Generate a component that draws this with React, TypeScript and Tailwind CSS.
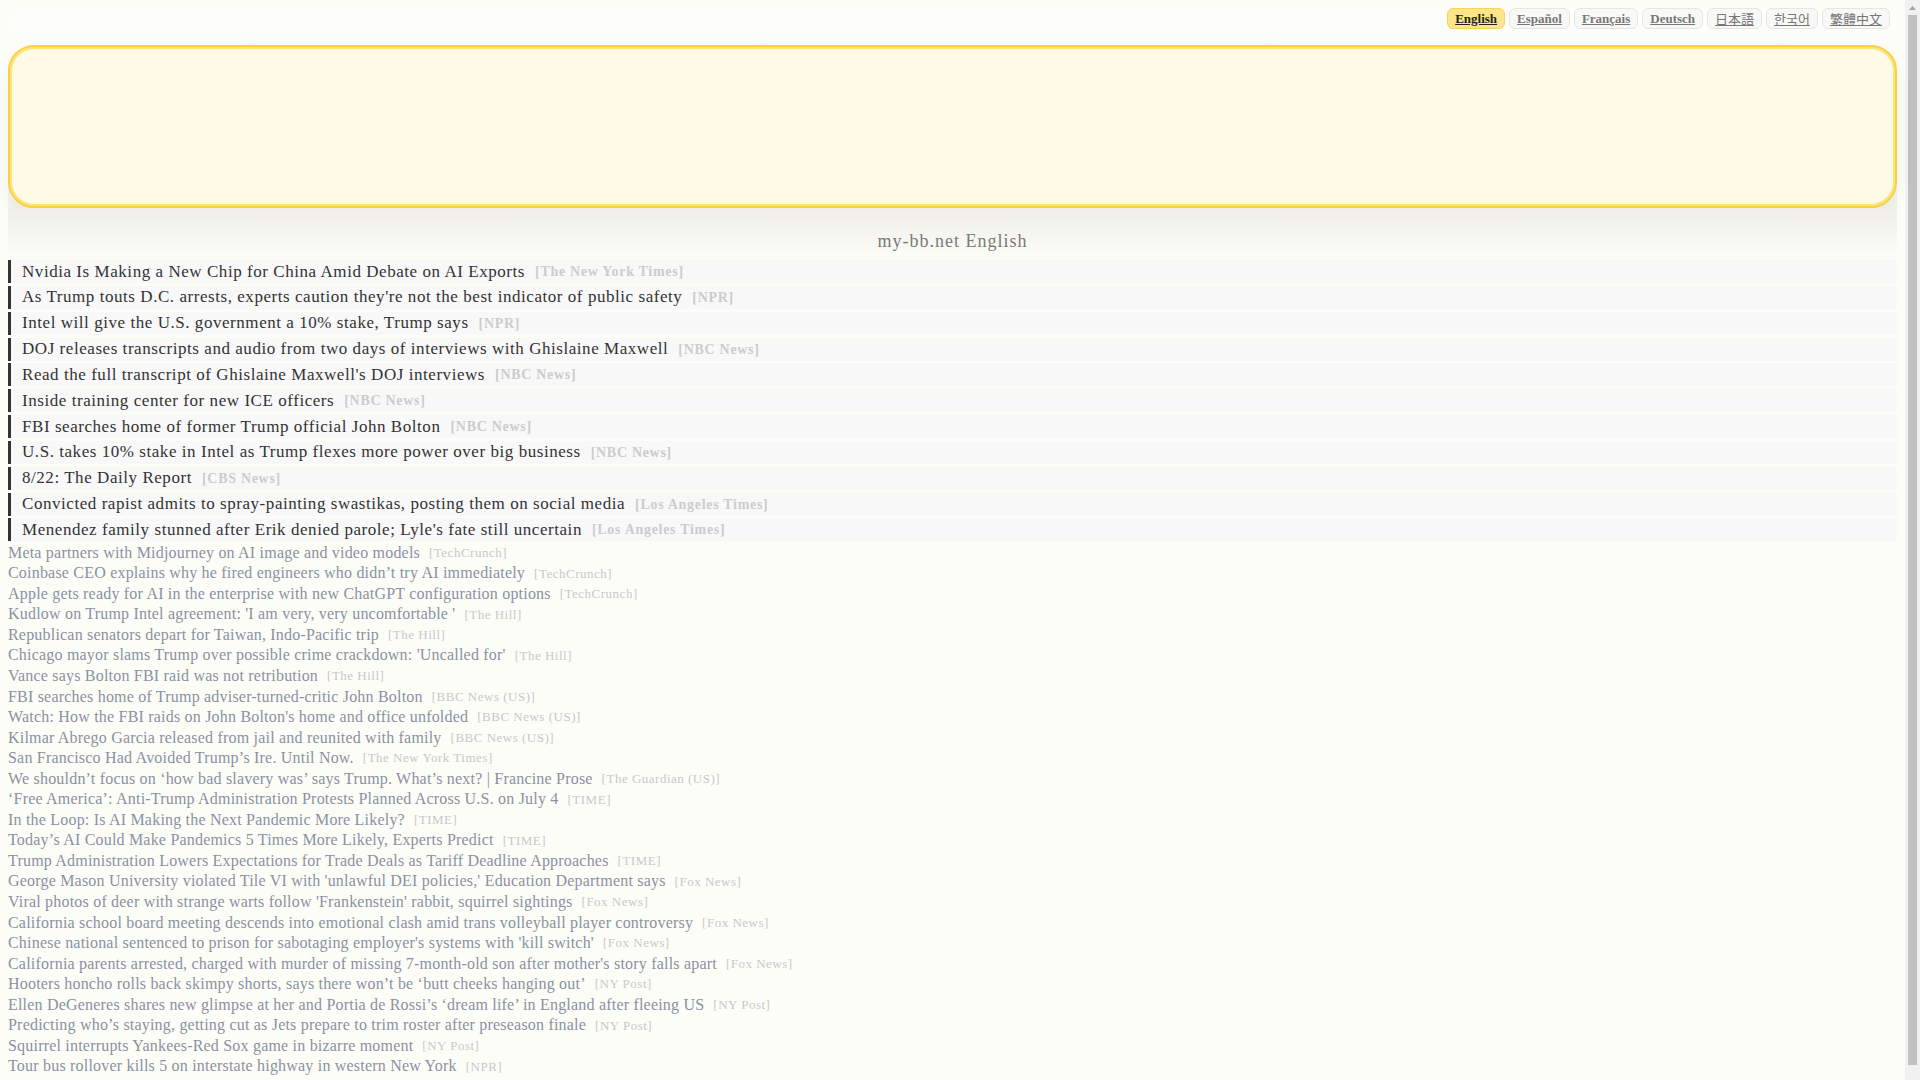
import React from 'react';

type Item = { title: string; source: string };

const LANGS = [
  { label: 'English', active: true, cjk: false },
  { label: 'Español', active: false, cjk: false },
  { label: 'Français', active: false, cjk: false },
  { label: 'Deutsch', active: false, cjk: false },
  { label: '日本語', active: false, cjk: true },
  { label: '한국어', active: false, cjk: true },
  { label: '繁體中文', active: false, cjk: true },
];

const HEADLINES: Item[] = [
  { title: 'Nvidia Is Making a New Chip for China Amid Debate on AI Exports', source: 'The New York Times' },
  { title: "As Trump touts D.C. arrests, experts caution they're not the best indicator of public safety", source: 'NPR' },
  { title: 'Intel will give the U.S. government a 10% stake, Trump says', source: 'NPR' },
  { title: 'DOJ releases transcripts and audio from two days of interviews with Ghislaine Maxwell', source: 'NBC News' },
  { title: "Read the full transcript of Ghislaine Maxwell's DOJ interviews", source: 'NBC News' },
  { title: 'Inside training center for new ICE officers', source: 'NBC News' },
  { title: 'FBI searches home of former Trump official John Bolton', source: 'NBC News' },
  { title: 'U.S. takes 10% stake in Intel as Trump flexes more power over big business', source: 'NBC News' },
  { title: '8/22: The Daily Report', source: 'CBS News' },
  { title: 'Convicted rapist admits to spray-painting swastikas, posting them on social media', source: 'Los Angeles Times' },
  { title: "Menendez family stunned after Erik denied parole; Lyle's fate still uncertain", source: 'Los Angeles Times' },
];

const MORE: Item[] = [
  { title: 'Meta partners with Midjourney on AI image and video models', source: 'TechCrunch' },
  { title: 'Coinbase CEO explains why he fired engineers who didn’t try AI immediately', source: 'TechCrunch' },
  { title: 'Apple gets ready for AI in the enterprise with new ChatGPT configuration options', source: 'TechCrunch' },
  { title: "Kudlow on Trump Intel agreement: 'I am very, very uncomfortable '", source: 'The Hill' },
  { title: 'Republican senators depart for Taiwan, Indo-Pacific trip', source: 'The Hill' },
  { title: "Chicago mayor slams Trump over possible crime crackdown: 'Uncalled for'", source: 'The Hill' },
  { title: 'Vance says Bolton FBI raid was not retribution', source: 'The Hill' },
  { title: 'FBI searches home of Trump adviser-turned-critic John Bolton', source: 'BBC News (US)' },
  { title: "Watch: How the FBI raids on John Bolton's home and office unfolded", source: 'BBC News (US)' },
  { title: 'Kilmar Abrego Garcia released from jail and reunited with family', source: 'BBC News (US)' },
  { title: 'San Francisco Had Avoided Trump’s Ire. Until Now.', source: 'The New York Times' },
  { title: 'We shouldn’t focus on ‘how bad slavery was’ says Trump. What’s next? | Francine Prose', source: 'The Guardian (US)' },
  { title: '‘Free America’: Anti-Trump Administration Protests Planned Across U.S. on July 4', source: 'TIME' },
  { title: 'In the Loop: Is AI Making the Next Pandemic More Likely?', source: 'TIME' },
  { title: 'Today’s AI Could Make Pandemics 5 Times More Likely, Experts Predict', source: 'TIME' },
  { title: 'Trump Administration Lowers Expectations for Trade Deals as Tariff Deadline Approaches', source: 'TIME' },
  { title: "George Mason University violated Tile VI with 'unlawful DEI policies,' Education Department says", source: 'Fox News' },
  { title: "Viral photos of deer with strange warts follow 'Frankenstein' rabbit, squirrel sightings", source: 'Fox News' },
  { title: 'California school board meeting descends into emotional clash amid trans volleyball player controversy', source: 'Fox News' },
  { title: "Chinese national sentenced to prison for sabotaging employer's systems with 'kill switch'", source: 'Fox News' },
  { title: "California parents arrested, charged with murder of missing 7-month-old son after mother's story falls apart", source: 'Fox News' },
  { title: 'Hooters honcho rolls back skimpy shorts, says there won’t be ‘butt cheeks hanging out’', source: 'NY Post' },
  { title: 'Ellen DeGeneres shares new glimpse at her and Portia de Rossi’s ‘dream life’ in England after fleeing US', source: 'NY Post' },
  { title: 'Predicting who’s staying, getting cut as Jets prepare to trim roster after preseason finale', source: 'NY Post' },
  { title: 'Squirrel interrupts Yankees-Red Sox game in bizarre moment', source: 'NY Post' },
  { title: 'Tour bus rollover kills 5 on interstate highway in western New York', source: 'NPR' },
];

const LangBar = () => (
  <div className="h-[37px] flex justify-end items-start gap-1 pr-[7px]">
    {LANGS.map((l) => (
      <a
        key={l.label}
        href="#"
        className={`px-[7px] py-[2px] rounded-md border text-[13px] leading-[15px] underline ${
          l.cjk ? 'font-normal' : 'font-bold'
        } ${
          l.active
            ? 'bg-[#fde68a] border-[#f9d45c] text-[#222]'
            : 'bg-[#f8f8f6] border-[#e6e6e3] text-[#777]'
        }`}
        style={l.cjk ? { fontFamily: '"Noto Sans CJK JP", "Noto Sans CJK KR", "Noto Sans CJK TC", sans-serif' } : undefined}
      >
        {l.label}
      </a>
    ))}
  </div>
);

const Headline = ({ item }: { item: Item }) => (
  <div className="h-[23px] flex items-center bg-[#f8f8f8] border-l-[3px] border-[#333] pl-[11px]">
    <a href="#" className="text-[17px] tracking-[0.55px] text-[#333] leading-[22px] whitespace-nowrap">
      {item.title}
    </a>
    <span className="ml-[10px] text-[14px] font-bold tracking-[0.7px] text-[#cccccc] whitespace-nowrap">
      [{item.source}]
    </span>
  </div>
);

const MoreRow = ({ item }: { item: Item }) => (
  <div className="h-[20.55px] flex items-center whitespace-nowrap">
    <a href="#" className="text-[16px] tracking-[0.2px] leading-[20px] text-[#8a91a2]">
      {item.title}
    </a>
    <span className="ml-[9px] text-[13px] tracking-[0.5px] text-[#c8c8c8]">[{item.source}]</span>
  </div>
);

// classic browser scrollbar seen at the right edge of the screenshot
const ScrollTrack = () => (
  <div className="w-[15px] shrink-0 bg-[#f1f1f1] flex flex-col items-center">
    <div className="h-[15px] flex items-center justify-center">
      <svg width="7" height="4" viewBox="0 0 7 4">
        <path d="M0 4 L3.5 0 L7 4 Z" fill="#a3a3a3" />
      </svg>
    </div>
    <div className="w-[9px] flex-1 mb-[15px] bg-[#c1c1c1]" />
  </div>
);

export default function App() {
  return (
    <div
      className="h-screen overflow-hidden flex bg-[#fdfdf8]"
      style={{ fontFamily: '"Liberation Serif", "Times New Roman", serif' }}
    >
      <div className="flex-1 min-w-0 px-2 pt-2">
        <div className="rounded-t-2xl bg-gradient-to-b from-[#fefefa] to-[#f4f4ef]">
          <LangBar />
          <div className="h-[163px] rounded-[26px] border-2 border-[#fbd03a] bg-[#fffae6] shadow-[inset_0_0_0_2px_#fde37c,0_8px_16px_rgba(0,0,0,0.05)]" />
        </div>
        <div className="h-[52px] pt-[22px] bg-gradient-to-b from-[#efeee8] to-[#fdfdf8] text-center">
          <h1 className="text-[18px] leading-[22px] tracking-[1px] text-[#7a7a7a]">my-bb.net English</h1>
        </div>
        <div className="flex flex-col gap-[2.85px]">
          {HEADLINES.map((h) => (
            <Headline key={h.title} item={h} />
          ))}
        </div>
        <div className="mt-[1px]">
          {MORE.map((m) => (
            <MoreRow key={m.title} item={m} />
          ))}
        </div>
      </div>
      <ScrollTrack />
    </div>
  );
}
